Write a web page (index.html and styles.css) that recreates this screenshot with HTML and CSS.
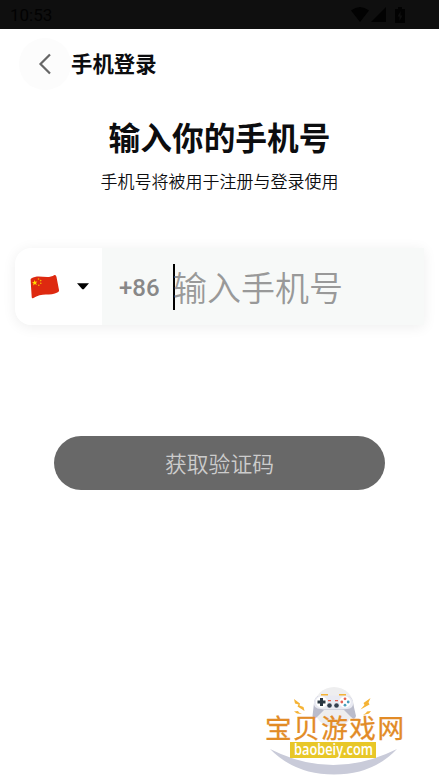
FILE: index.html
```html
<!DOCTYPE html>
<html lang="zh-CN">
<head>
    <meta charset="UTF-8">
    <meta name="viewport" content="width=device-width, initial-scale=1.0">
    <title>手机登录</title>
    <link rel="stylesheet" href="styles.css">
</head>
<body>
    <div class="status-bar">
        <span class="time">10:53</span>
        <div class="status-icons">
            <svg width="18" height="15" viewBox="0 0 18 15"><path d="M0 3.5Q9-3.5 18 3.5L9 15z"/></svg>
            <svg width="15" height="15" viewBox="0 0 15 15"><path d="M15 0v15H0z"/></svg>
            <svg class="battery" width="10" height="16" viewBox="0 0 10 16"><path fill-rule="evenodd" d="M3 0h4v2h3v14H0V2h3zM5.7 4L2.5 9.500h2V14l3-5.500h-2z"/></svg>
        </div>
    </div>

    <header class="header">
        <button class="back-btn" aria-label="返回">
            <svg width="14" height="22" viewBox="0 0 14 22"><path d="M12 1.500L2.500 11l9.500 9.500"/></svg>
        </button>
        <span class="header-title">手机登录</span>
    </header>

    <main class="login">
        <h1>输入你的手机号</h1>
        <p class="hint">手机号将被用于注册与登录使用</p>

        <div class="phone-box">
            <div class="country">
                <svg class="flag" width="30" height="26" viewBox="0 0 30 26">
                    <path fill="#de2910" d="M1.200 4.500C9-.5 17 6 24.500 1Q26.200 .8 26.500 3L29 16c.2 1-.2 1.800-1.200 2.200C20 22.500 12 18 3 24.200Q1.800 24.700 1.700 23L.6 6Q.5 5 1.200 4.500z"/>
                    <path fill="#ffde00" d="M4.500 6l.9 1.700 2-.2-1.400 1.500.8 1.900-1.900-.8-1.600 1.300.2-2.100L2 8.200l1.900-.3z"/>
                    <g fill="#f5b800"><circle cx="8.500" cy="5" r=".8"/><circle cx="10.700" cy="6.600" r=".8"/><circle cx="10.800" cy="9.300" r=".8"/><circle cx="8.800" cy="11.300" r=".8"/></g>
                </svg>
                <svg class="caret" width="12" height="7" viewBox="0 0 12 7"><path d="M0 .3h12L6.700 6.300H5.300z"/></svg>
            </div>
            <div class="number">
                <span class="code">+86</span>
                <span class="cursor"></span>
                <span class="placeholder">输入手机号</span>
            </div>
        </div>

        <button class="submit-btn"><span>获取验证码</span></button>
    </main>

    <!-- site watermark -->
    <svg class="watermark" width="160" height="100" viewBox="0 0 160 100">
        <circle cx="79" cy="27" r="20" fill="#eeeeef"/>
        <path fill="#c9cbd9" d="M15 69Q78 101 142 69Q118 94.500 79 94.500Q40 94.500 15 69z"/>
        <g fill="#f5b335">
            <path d="M39 19l6 4.500-.5 2 4 1.500 1 4-7-4.500 1-2-3.500-1z"/>
            <path d="M115.500 18l-7 5 1 2-4 4.500 9-5-1-2z"/>
            <path d="M39 31.500l4-.5 1 1.500 3 1.500-5-.5zM116 31l-4 .5-1 1.500-3 2 6-1.500z"/>
            <path d="M66 14h7v3h-7zM84 14h7v3h-7z"/>
        </g>
        <path fill="#babccb" d="M64 16q-4 0-5 7l-1.500 13q1 5 4.500 1l7-7h20l8 8q3 2 4-2l-3-13q-1-7-6-7z"/>
        <path fill="#e9eaf2" d="M66 15.500h25q5 0 7 6 1 8-7 7.500l-4 .5H69l-3-.5q-8 0-7-7 1-6.500 7-6.500z"/>
        <circle cx="66.500" cy="22" r="5.700" fill="#fff"/>
        <path fill="#293641" d="M65 18h3v2.500h2.500v3H68V26h-3v-2.500h-2.500v-3H65z"/>
        <g fill="#334050"><circle cx="74.500" cy="25.500" r="2.300"/><circle cx="81.500" cy="25.500" r="2.300"/></g>
        <path fill="#e46255" d="M73 20h3v1.200h-3zM80 20h3v1.200h-3z"/>
        <circle cx="90" cy="22" r="5.700" fill="#fff"/>
        <g fill="#e46255"><circle cx="90" cy="18.800" r="1.400"/><circle cx="86.800" cy="22" r="1.400"/></g>
        <g fill="#4b9dba"><circle cx="90" cy="25.200" r="1.400"/><circle cx="93.200" cy="22" r="1.400"/></g>
        <text class="site-name" x="10" y="57.500" textLength="139">宝贝游戏网</text>
        <path fill="#e8c728" d="M35 62h86v16H35z"/>
        <text class="site-url" x="39" y="75" textLength="79" lengthAdjust="spacingAndGlyphs">baobeiy.com</text>
    </svg>
</body>
</html>
```
FILE: styles.css
```css
* {
    box-sizing: border-box;
}

body {
    margin: 0;
    height: 780px;
    position: relative;
    overflow: hidden;
    background-color: #fff;
    color: #0c0d0f;
    font-family: Roboto, "Noto Sans CJK SC", sans-serif;
}

button {
    border: none;
    padding: 0;
    font-family: inherit;
}

.status-bar {
    display: flex;
    justify-content: space-between;
    align-items: center;
    height: 29px;
    padding: 0 34px 0 10px;
    background-color: #0f0f0f;
    color: #020202;
}

.time {
    font-size: 17px;
}

.status-icons {
    display: flex;
    align-items: center;
    gap: 2px;
    fill: #020202;
}

.battery {
    margin-left: 7px;
}

.header {
    display: flex;
    align-items: center;
    height: 52px;
    margin: 9px 0 0 19px;
}

.back-btn {
    display: flex;
    justify-content: center;
    align-items: center;
    width: 52px;
    height: 52px;
    border-radius: 50%;
    background-color: #fcfcfc;
}

.back-btn path {
    fill: none;
    stroke: #666;
    stroke-width: 2.2;
}

.header-title {
    font-size: 21.4px;
    font-weight: bold;
    line-height: 52px;
    padding-top: 1px;
}

.login {
    display: flex;
    flex-direction: column;
    align-items: center;
}

h1 {
    margin: 26px 0 0;
    font-size: 31.7px;
    line-height: 48px;
}

.hint {
    margin: 5px 0 0;
    font-size: 17px;
    font-weight: 350;
    line-height: 26px;
}

.phone-box {
    display: flex;
    width: 409px;
    height: 77px;
    margin: 53px 0 0;
    border-radius: 16px 0 0 16px;
    background-color: #f7f9f8;
    box-shadow: 0 2px 14px rgba(0, 0, 0, 0.07);
    overflow: hidden;
}

.country {
    display: flex;
    align-items: center;
    gap: 17px;
    width: 87px;
    padding-left: 15px;
    background-color: #fff;
}

.number {
    display: flex;
    align-items: center;
    padding-left: 17px;
}

.code {
    width: 54px;
    color: #888;
    font-size: 24px;
    font-weight: 500;
    padding-top: 3px;
}

.cursor {
    width: 2px;
    height: 46px;
    background-color: #000;
}

.placeholder {
    color: #999;
    font-size: 34px;
    font-weight: 350;
    line-height: 50px;
    margin-left: -2px;
    padding-top: 4px;
}

.submit-btn {
    width: 331px;
    height: 54px;
    margin-top: 111px;
    padding-bottom: 2px;
    border-radius: 27px;
    background-color: #686868;
    color: #ccc;
    font-size: 21.8px;
    font-weight: 350;
}

.watermark {
    position: absolute;
    left: 255px;
    top: 680px;
}

.site-name {
    fill: #e28b26;
    font-family: "Noto Sans CJK SC", sans-serif;
    font-size: 26.6px;
    font-weight: 400;
    stroke: #e28b26;
    stroke-width: 0.3;
}

.site-url {
    fill: #fff;
    font-family: "Open Sans", sans-serif;
    font-size: 15.5px;
    font-weight: 600;
}
```
